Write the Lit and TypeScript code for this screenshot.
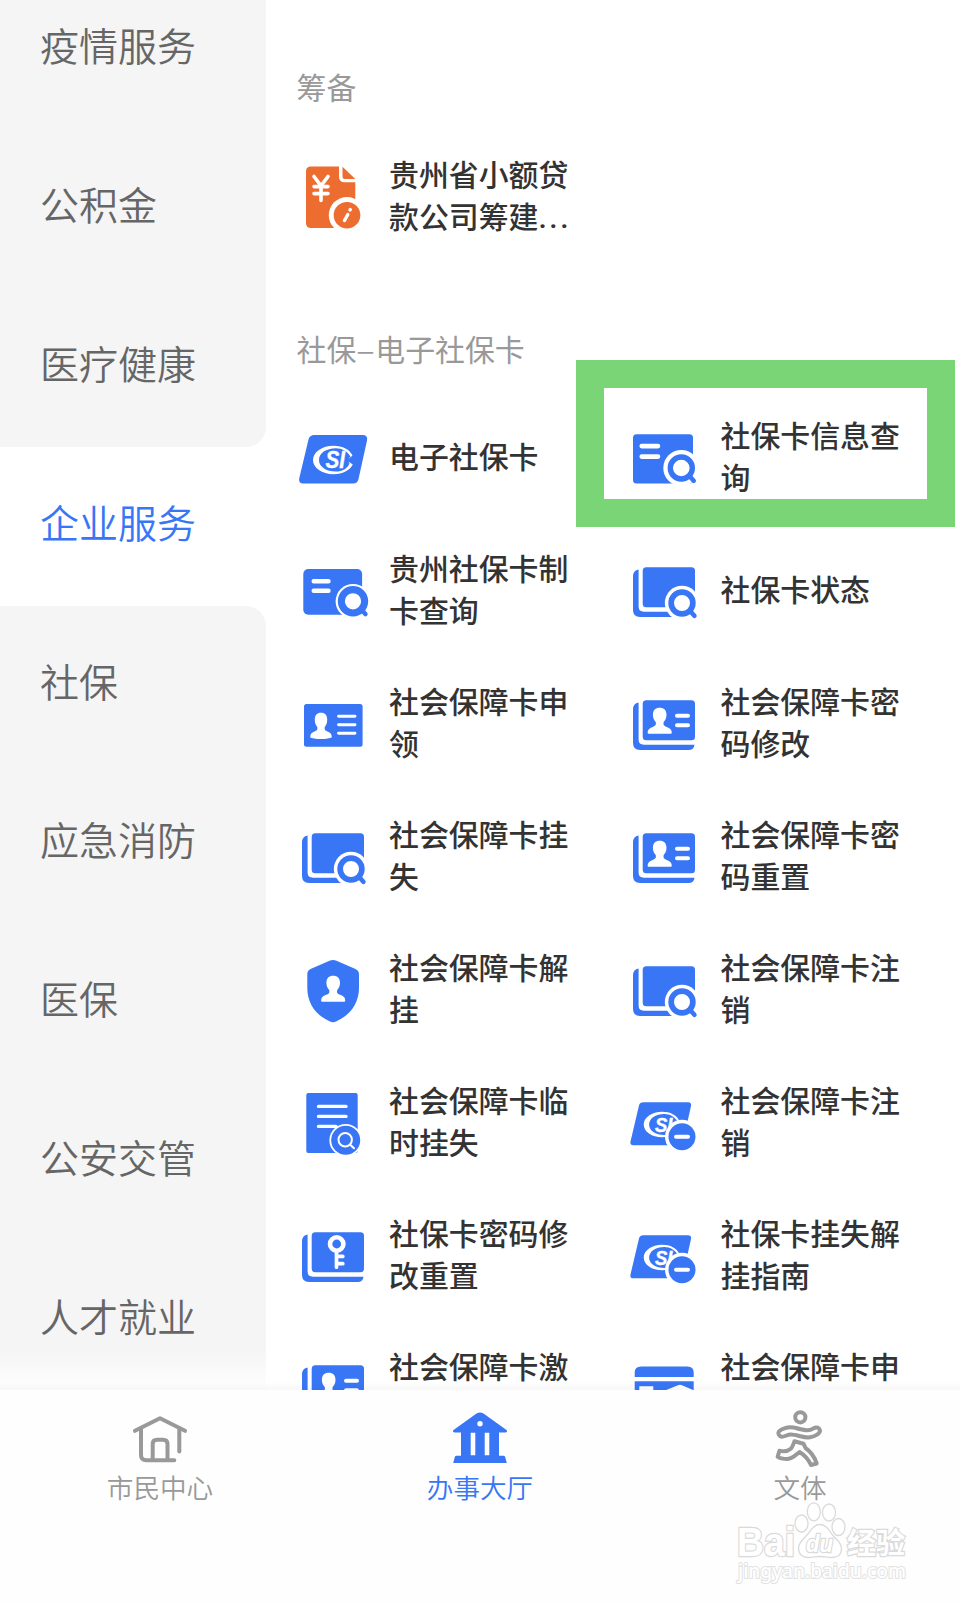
import { LitElement, html, svg, css } from "lit";
import { customElement, property } from "lit/decorators.js";

const BLUE = "#3876f6";

const person = (x: number, y: number, s = 1) => svg`
  <path transform="translate(${x} ${y}) scale(${s})" fill="#fff"
    d="M0 0C4.2 0 6.8 2.6 6.8 7C6.8 10 5.6 12.600 4 14.300C3.400 17 4 18.200 7 19.100C10.500 20.200 12 22 12.100 25Q12.100 26 11 26H-11Q-12.100 26 -12.100 25C-12 22 -10.500 20.200 -7 19.100C-4 18.200 -3.400 17 -4 14.300C-5.600 12.600 -6.800 10 -6.800 7C-6.800 2.600 -4.200 0 0 0Z"/>`;

const cardStack = svg`
  <path fill="${BLUE}" d="M13.600 19.600V56.500Q13.600 61.700 19 61.700H69.500Q69 67 63.500 67H15Q8 67 8 60V26.500Q8 20.500 13.600 19.600Z"/>
  <rect x="17.700" y="17.200" width="52.300" height="40" rx="3.500" fill="${BLUE}"/>`;

const lens = (cx: number, cy: number, halo: number, outer: number, inner: number) => svg`
  <circle cx=${cx} cy=${cy} r=${halo} fill="#fff"/>
  <path d="M${cx + 9} ${cy + 9}L${cx + 12.400} ${cy + 12.700}" stroke="${BLUE}" stroke-width="4.600" stroke-linecap="round"/>
  <circle cx=${cx} cy=${cy} r=${(outer + inner) / 2} fill="#fff" stroke="${BLUE}" stroke-width=${outer - inner}/>`;

const emblem = svg`
  <path fill="#fff" fill-rule="evenodd" d="M59.500 38.500C57 32.500 49.500 28.700 40.500 28.700C29 28.700 20 35 20 43C20 51 29 57.200 40.500 57.200C49.500 57.200 57 53.200 59.800 47.500L55.300 44.600L56.500 46.500C54.500 51.500 49.500 54.600 43 54.600C33 54.600 26 49.700 26 43C26 36.200 33 31.200 43 31.200C49 31.200 54.500 34.200 57.500 39.500L55 42.500Z"/>
  <text x="32.500" y="51.300" font-family="Liberation Sans" font-weight="700" font-style="italic" font-size="23" textLength="19.500" lengthAdjust="spacingAndGlyphs" fill="#fff" stroke="#fff" stroke-width=".4">SI</text>`;

const minusCard = svg`
  <path fill="${BLUE}" d="M18.500 20.200H63Q66.800 20.200 66 24L58 60Q57.200 63.300 54 63.300H8.500Q4.700 63.300 5.500 59.500L14 23.500Q14.800 20.200 18.500 20.200Z"/>
  <g transform="translate(.7 3.800) scale(.9)">${emblem}</g>
  <circle cx="57" cy="54.700" r="17" fill="#fff"/>
  <circle cx="57" cy="54.700" r="13.500" fill="${BLUE}"/>
  <path d="M51 54.700H63" stroke="#fff" stroke-width="4" stroke-linecap="round"/>`;

const lines = (d: string, w: number) =>
  svg`<path d=${d} stroke="#fff" stroke-width=${w} stroke-linecap="round" fill="none"/>`;

const ICONS: Record<string, unknown> = {
  loan: svg`
    <path fill="#ed6c30" d="M17 10.500H45V20.500Q45 26.300 50.500 26.300H61.300V72H17Q12 72 12 67V15.500Q12 10.500 17 10.500Z"/>
    <path fill="#ed6c30" d="M48.500 10.800L61.300 23H51Q48.500 23 48.500 20.500Z"/>
    ${lines("M20 20.500L27 29.800L34 20.500M27 30V44.500M20 30.600H34M20 37.600H34", 3.6)}
    <circle cx="53" cy="59.200" r="18.200" fill="#fff"/>
    <circle cx="53" cy="59.200" r="13.300" fill="#ed6c30"/>
    ${lines("M53.800 58.500L50.500 64.500M56 53.900L56.300 53.500", 3.4)}`,
  si: svg`
    <g transform="translate(-1 0)">
      <path fill="${BLUE}" d="M21.500 18H69.500Q75.200 18 74 23.500L65.500 62Q64.500 66.500 60 66.500H10.500Q5 66.500 6.300 61L15.500 22.500Q16.500 18 21.500 18Z"/>
      ${emblem}
    </g>`,
  cardSearch: svg`
    <rect x="8" y="17.200" width="60" height="49.300" rx="3.500" fill="${BLUE}"/>
    ${lines("M16.700 29.100H33M16.700 39.600H33", 4.6)}
    ${lens(56.3, 51, 18, 13.7, 8.3)}`,
  makeSearch: svg`
    <rect x="9.300" y="19" width="58.800" height="45.800" rx="5" fill="${BLUE}"/>
    ${lines("M19.700 31.300H34.500M19.700 40.700H34.500", 4.4)}
    ${lens(59, 51.3, 17.4, 15.200, 8.1)}`,
  stackSearch: svg`${cardStack}${lens(57, 53, 17.2, 13.7, 8)}`,
  idCard: svg`
    <rect x="10" y="21" width="58.600" height="42.800" rx="2.500" fill="${BLUE}"/>
    <path transform="translate(27 29.800)" fill="#fff" d="M0 0C4 0 6.200 2.600 6.200 7C6.200 10 5.200 12.600 3.700 14.300C3.300 17 4 18 6.500 18.800C9.500 19.800 10.800 21.500 10.800 24.500C8 26.900 -8 26.900 -10.800 24.500C-10.800 21.500 -9.500 19.800 -6.500 18.800C-4 18 -3.300 17 -3.700 14.300C-5.200 12.600 -6.200 10 -6.200 7C-6.200 2.600 -4 0 0 0Z"/>
    ${lines("M44.500 33.300H61M44.500 41.700H61M44.500 50.300H61", 2.9)}`,
  idStack: svg`${cardStack}${person(34.7, 24.8)}${lines("M52 32.800H63M52 42.200H63", 4)}`,
  shield: svg`
    <path fill="${BLUE}" d="M35.500 11.800Q39 10.200 42.500 11.800L61.500 20Q64.800 21.500 65 25V39C65 54 56.500 66 42.500 72.300Q39 74 35.500 72.300C21.500 66 13.300 54 13.300 39V25Q13.300 21.500 16.500 20Z"/>
    ${person(39.2, 26.7)}`,
  docSearch: svg`
    <rect x="12.300" y="11" width="51.400" height="60" rx="2" fill="${BLUE}"/>
    ${lines("M24.500 24.400H52M24.500 34.400H52M24.500 44.400H42", 3.4)}
    <circle cx="51.700" cy="58.200" r="16.300" fill="#fff"/>
    <circle cx="51.700" cy="58.200" r="14.500" fill="${BLUE}"/>
    <circle cx="51.200" cy="57.700" r="6.700" fill="none" stroke="#fff" stroke-width="2"/>
    ${lines("M56.200 62.700L60 66.300", 2)}`,
  siMinus: minusCard,
  key: svg`${cardStack}
    <circle cx="42.700" cy="29" r="6.700" fill="none" stroke="#fff" stroke-width="4.600"/>
    ${lines("M42.500 37V52.200M43 41.400H48.800M43 48.700H48.800", 3.7)}`,
  apply: svg`
    <path fill="${BLUE}" d="M16 18.500H62.500Q68.700 18.500 68.700 24.500V29H9.700V24.500Q9.700 18.500 16 18.500Z"/>
    <path fill="${BLUE}" d="M9.700 33.200H68.700V66H9.700Z"/>
    <path fill="#fff" d="M14.300 38.200H28.300V50H14.300ZM37 43.700L53 37.200Q55 36.500 57 37.200L72 43.700L55 51Z"/>`,
};

type Service = { icon: string; label: string; more?: boolean };

@customElement("service-item")
class ServiceItem extends LitElement {
  @property({ attribute: false }) item!: Service;

  static styles = css`
    :host { display: flex; align-items: center; height: 133px; }
    .icon { width: 80px; height: 80px; flex: none; margin-top: 2px; }
    .label { margin-left: var(--label-gap, 15px); width: 184px; line-height: 41.700px; font-size: 29.900px; font-weight: 500; color: #333; word-break: break-all; }
    .dots { font-family: Roboto, sans-serif; letter-spacing: 2.600px; line-height: 1; }
  `;

  render() {
    return html`
      <svg class="icon" viewBox="0 0 80 80">${ICONS[this.item.icon]}</svg>
      <div class="label">${this.item.label}${this.item.more ? html`<span class="dots">...</span>` : ""}</div>
    `;
  }
}

const CATEGORIES = ["疫情服务", "公积金", "医疗健康", "企业服务", "社保", "应急消防", "医保", "公安交管", "人才就业"];
const ACTIVE = 3;

const CARDS: Service[] = [
  { icon: "si", label: "电子社保卡" },
  { icon: "cardSearch", label: "社保卡信息查询" },
  { icon: "makeSearch", label: "贵州社保卡制卡查询" },
  { icon: "stackSearch", label: "社保卡状态" },
  { icon: "idCard", label: "社会保障卡申领" },
  { icon: "idStack", label: "社会保障卡密码修改" },
  { icon: "stackSearch", label: "社会保障卡挂失" },
  { icon: "idStack", label: "社会保障卡密码重置" },
  { icon: "shield", label: "社会保障卡解挂" },
  { icon: "stackSearch", label: "社会保障卡注销" },
  { icon: "docSearch", label: "社会保障卡临时挂失" },
  { icon: "siMinus", label: "社会保障卡注销" },
  { icon: "key", label: "社保卡密码修改重置" },
  { icon: "siMinus", label: "社保卡挂失解挂指南" },
  { icon: "idStack", label: "社会保障卡激活" },
  { icon: "apply", label: "社会保障卡申请" },
];

const TABS = [
  {
    label: "市民中心",
    icon: svg`<g fill="none" stroke="#999" stroke-width="4" stroke-linecap="round" stroke-linejoin="round">
      <path d="M5 20.800L30 8.200L55 20.800"/><path d="M11 19V45Q11 50.300 16.500 50.300H44.300"/>
      <path d="M49.300 19V41.500"/><path d="M22.700 50V34Q22.700 29.800 27 29.800H33Q37.500 29.800 37.500 34V50"/></g>`,
  },
  {
    label: "办事大厅",
    icon: svg`<path fill="${BLUE}" fill-rule="evenodd" d="M26.500 3.600Q30 1.400 33.500 3.600L56.500 20Q58 22.500 55 22.500H49V45.700H53.500Q54.800 45.700 55.200 47L56.800 53H3.200L4.800 47Q5.200 45.700 6.500 45.700H11V22.500H5Q2 22.500 3.500 20ZM20.700 22.700V45.300H25.300V22.700ZM34.700 22.700V45.300H39.300V22.700Z"/>
      <circle cx="30" cy="13.700" r="2.700" fill="#fff"/>`,
  },
  {
    label: "文体",
    icon: svg`<g fill="none" stroke="#999" stroke-width="4" stroke-linejoin="round">
      <circle cx="30.300" cy="7.300" r="5.100"/>
      <path d="M8.800 21.500C14 17.500 20 16.600 26 18C34 20.300 39 21.300 43.500 18.300C46.500 16.300 49.500 18 50 20.500C50 23.500 45.500 26.300 40 27.300C34 28.300 27 24.500 21 24.500C17 24.500 14.500 27 11.500 26.700C9 26 7.500 23.500 8.800 21.500Z"/>
      <path d="M24.500 31.300L33.500 33.700L35.500 38C40.500 41.500 44.500 47 46.700 53.500L41 55C38.500 49.500 34 44.700 29.500 42C25.500 45 23 48.800 17.500 49C13.500 49 9.500 48.300 7.600 46.800L9.500 40.700C13 41.700 17.500 41.600 20.800 38.800C22.600 37 23.300 34.300 24.500 31.300Z"/></g>`,
  },
];

@customElement("app-root")
class AppRoot extends LitElement {
  static styles = css`
    :host {
      display: flex; flex-direction: column; position: relative; width: 960px; height: 1605px;
      overflow: hidden; background: #fff;
      font-family: "Noto Sans CJK SC", "Noto Sans", sans-serif;
    }
    .body { display: flex; height: 1390px; overflow: hidden; }
    .side { width: 266px; flex: none; overflow: hidden; }
    .side-list { display: flex; flex-direction: column; margin-top: -29.500px; }
    .cat {
      box-sizing: border-box; flex: none; height: 158.800px; padding: 0 0 11px 40px; background: #f5f5f5;
      display: flex; align-items: center; font-size: 39px; font-weight: 350; line-height: 56px; color: #666;
    }
    .cat.on { background: #fff; color: #3876f6; }
    .cat.before { border-bottom-right-radius: 20px; }
    .cat.after { border-top-right-radius: 20px; }
    .main { flex: 1; padding-left: 28px; }
    .title { padding-left: 2.500px; font-size: 29.900px; line-height: 44px; color: #999; }
    .title.first { margin: 64px 0 20px; }
    .title.second { margin: 65px 0 19.500px; }
    .dash { display: inline-block; width: 19px; text-align: center; transform: scaleX(1.15); }
    .grid { display: grid; grid-template-columns: 330.500px 330.500px; }
    .grid service-item:nth-child(even) { --label-gap: 16px; }
    .fade { position: absolute; left: 0; top: 1350px; width: 266px; height: 40px; background: linear-gradient(#fff0, #fffe); }
    .edge { position: absolute; left: 0; top: 1382px; width: 960px; height: 8px; background: linear-gradient(#0000, #00000008); }
    .tabs { display: grid; grid-template-columns: repeat(3, 1fr); height: 215px; background: #fefefe; }
    .tab { display: flex; flex-direction: column; align-items: center; padding-top: 20px; color: #999; font-size: 26.600px; line-height: 34px; font-weight: 350; }
    .tab.on { color: #3876f6; }
    .tab-icon { width: 60px; height: 60px; }
    .highlight { position: absolute; left: 576px; top: 360px; width: 323px; height: 111px; border: 28px solid #7ad577; }
    .mark { position: absolute; left: 730px; top: 1496px; width: 190px; height: 96px; }
  `;

  render() {
    return html`
      <div class="body">
        <div class="side">
          <div class="side-list">
            ${CATEGORIES.map((c, i) => html`
              <div class="cat ${i === ACTIVE ? "on" : i === ACTIVE - 1 ? "before" : i === ACTIVE + 1 ? "after" : ""}">${c}</div>`)}
          </div>
        </div>
        <div class="main">
          <div class="title first">筹备</div>
          <service-item .item=${{ icon: "loan", label: "贵州省小额贷款公司筹建", more: true }}></service-item>
          <div class="title second">社保<span class="dash">–</span>电子社保卡</div>
          <div class="grid">
            ${CARDS.map((c) => html`<service-item .item=${c}></service-item>`)}
          </div>
        </div>
      </div>
      <div class="tabs">
        ${TABS.map((t, i) => html`
          <div class="tab ${i === 1 ? "on" : ""}">
            <svg class="tab-icon" viewBox="0 0 60 60">${t.icon}</svg>
            <div>${t.label}</div>
          </div>`)}
      </div>
      <div class="fade"></div>
      <div class="edge"></div>
      <div class="highlight"></div>
      <svg class="mark" viewBox="0 0 190 96">
        <g fill="#fff" stroke="#dadada" stroke-width="1.300">
          <ellipse cx="71.500" cy="27.500" rx="6.500" ry="8.500"/>
          <ellipse cx="83.800" cy="15.800" rx="6.500" ry="9"/>
          <ellipse cx="99" cy="16.500" rx="6.500" ry="8.500"/>
          <ellipse cx="108.500" cy="31" rx="6.500" ry="8.500"/>
          <path d="M90 28.500C96 28.500 99 34 102.500 39C106 43.500 111.500 46 111.500 53C111.500 59 107 61.500 102 61.500C97 61.500 94 60.500 90 60.500C86 60.500 83 61.500 78 61.500C73 61.500 68.500 58.500 68.500 52C68.500 46 74 43 77.500 38.500C81 34 84 28.500 90 28.500Z"/>
          <g font-family="Liberation Sans" font-weight="700" paint-order="stroke" stroke-width="2.400">
            <text x="7" y="60" font-size="40" textLength="58" lengthAdjust="spacingAndGlyphs">Bai</text>
            <text x="76" y="56" font-size="24" font-style="italic" textLength="27" lengthAdjust="spacingAndGlyphs">du</text>
            <text x="117" y="58" font-size="29" font-family="Noto Sans CJK SC" textLength="58">经验</text>
            <text x="8" y="82" font-size="20" font-family="Noto Sans" font-weight="500" stroke="#e2e2e2" stroke-width="2" textLength="168" lengthAdjust="spacingAndGlyphs">jingyan.baidu.com</text>
          </g>
        </g>
      </svg>
    `;
  }
}
